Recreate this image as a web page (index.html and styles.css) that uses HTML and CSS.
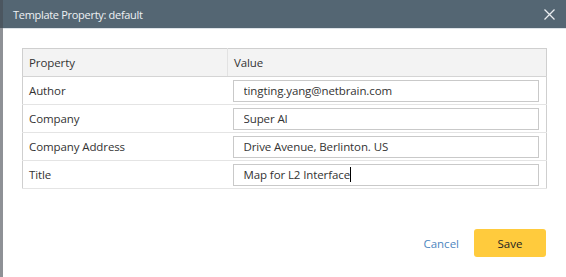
FILE: index.html
```html
<!DOCTYPE html>
<html lang="en">
<head>
    <meta charset="UTF-8">
    <meta name="viewport" content="width=device-width, initial-scale=1.0">
    <title>Template Property</title>
    <link rel="stylesheet" href="styles.css">
</head>
<body>
    <div class="backdrop"></div>

    <div class="dialog">
        <header class="dialog-header">
            <h1>Template Property: default</h1>
            <button class="close-button" aria-label="Close">
                <svg width="11" height="11" viewBox="0 0 11 11">
                    <path d="M0.5 0.5 L10.5 10.5 M10.5 0.5 L0.5 10.5" stroke="#e9edf0" stroke-width="1.3" fill="none"/>
                </svg>
            </button>
        </header>

        <div class="dialog-body">
            <table class="props">
                <thead>
                    <tr>
                        <th class="col-name">Property</th>
                        <th>Value</th>
                    </tr>
                </thead>
                <tbody>
                    <tr>
                        <td>Author</td>
                        <td><input type="text" value="tingting.yang@netbrain.com"></td>
                    </tr>
                    <tr>
                        <td>Company</td>
                        <td><input type="text" value="Super AI"></td>
                    </tr>
                    <tr>
                        <td>Company Address</td>
                        <td><input type="text" value="Drive Avenue, Berlinton. US"></td>
                    </tr>
                    <tr>
                        <td>Title</td>
                        <td>
                            <div class="field-editing">
                                <span class="field-text">Map for L2 Interface</span><span class="caret"></span>
                            </div>
                        </td>
                    </tr>
                </tbody>
            </table>
        </div>

        <footer class="dialog-footer">
            <button class="cancel-button">Cancel</button>
            <button class="save-button">Save</button>
        </footer>
    </div>
</body>
</html>
```

FILE: styles.css
```css
body {
    font-family: 'Open Sans', 'Liberation Sans', sans-serif;
    margin: 0;
    padding: 0;
    display: flex;
    height: 277px;
    overflow: hidden;
    background-color: #ffffff;
    color: #333333;
}

.backdrop {
    width: 3px;
    flex-shrink: 0;
    background: linear-gradient(#4b5660 0, #4b5660 28px, #8e9196 28px);
}

.dialog {
    flex: 1;
    display: flex;
    flex-direction: column;
}

.dialog-header {
    height: 28px;
    background-color: #546673;
    border-bottom: 1px solid #dde3e8;
    display: flex;
    align-items: center;
    justify-content: space-between;
    padding: 0 11px 0 10px;
}

.dialog-header h1 {
    margin: 0;
    font-size: 11px;
    letter-spacing: -0.3px;
    font-weight: normal;
    color: #eef1f3;
}

.close-button {
    background: none;
    border: none;
    padding: 0;
    width: 11px;
    height: 11px;
    display: flex;
    cursor: pointer;
}

.dialog-body {
    padding: 19px 0 0 19px;
}

.props {
    width: 525px;
    border-collapse: collapse;
    font-size: 11.5px;
    letter-spacing: -0.1px;
    border: 1px solid #cfcfcf;
}

.props th,
.props td {
    text-align: left;
    font-weight: normal;
    padding: 0 6px;
    height: 27px;
    border-bottom: 1px solid #e4e4e4;
}

.props thead th {
    background-color: #f3f3f3;
    border-bottom: 1px solid #d4d4d4;
    height: 27px;
}

.props thead th.col-name {
    border-right: 1px solid #e2e2e2;
}

.col-name {
    width: 192px;
}

.props tbody td:last-child {
    padding: 0 6px 0 5px;
}

.props input,
.field-editing {
    width: 306px;
    height: 22px;
    box-sizing: border-box;
    border: 1px solid #c9c9c9;
    padding: 0 10px;
    font-family: inherit;
    font-size: 11.5px;
    letter-spacing: -0.1px;
    color: #333333;
    display: block;
    background: #ffffff;
}

.field-editing {
    display: flex;
    align-items: center;
}

.caret {
    width: 1px;
    height: 15px;
    background-color: #000000;
}

.dialog-footer {
    display: flex;
    justify-content: flex-end;
    align-items: center;
    gap: 15px;
    padding: 40px 20px 0 0;
}

.cancel-button {
    background: none;
    border: none;
    padding: 0;
    font-family: inherit;
    font-size: 11.5px;
    color: #4d86c0;
    cursor: pointer;
}

.save-button {
    width: 72px;
    height: 28px;
    border: none;
    border-radius: 3px;
    background-color: #ffcb3d;
    font-family: inherit;
    font-size: 11.5px;
    color: #222222;
    cursor: pointer;
}
```
